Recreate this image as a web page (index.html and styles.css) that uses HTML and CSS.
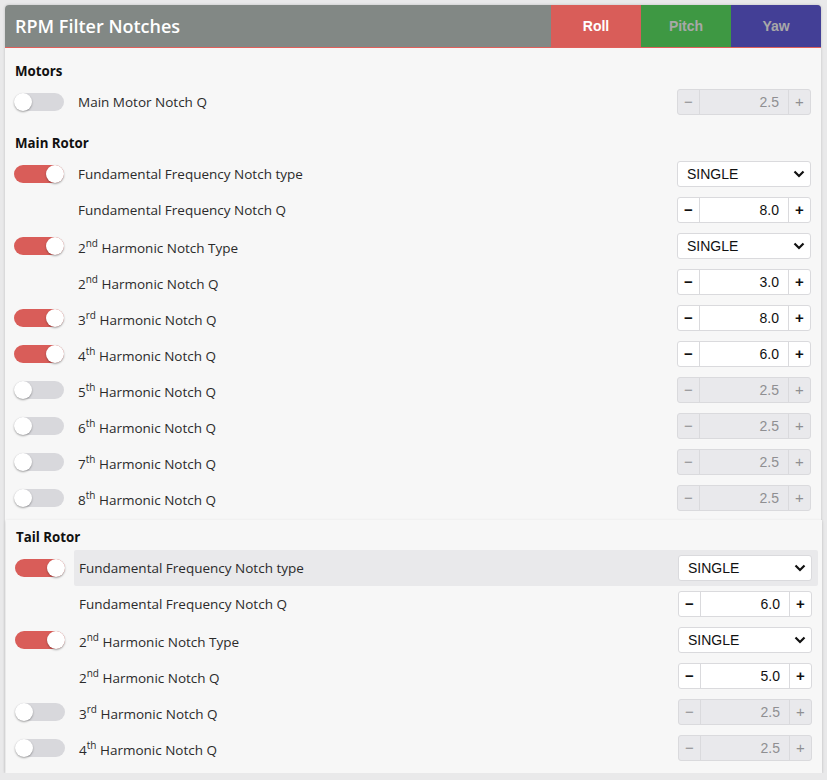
FILE: index.html
```html
<!DOCTYPE html>
<html>
<head>
<meta charset="utf-8">
<link rel="stylesheet" href="styles.css">
</head>
<body>
<div class="panel">
  <div class="head">
    <div class="title">RPM Filter Notches</div>
    <div class="tabs">
      <div class="tab roll">Roll</div>
      <div class="tab pitch">Pitch</div>
      <div class="tab yaw">Yaw</div>
    </div>
  </div>

  <div class="group first">
    <h3>Motors</h3>
    <div class="row"><span class="switch"></span><div class="cell"><span class="label">Main Motor Notch Q</span><div class="num disabled"><span class="btn">−</span><span class="val">2.5</span><span class="btn">+</span></div></div></div>
  </div>

  <div class="group">
    <h3>Main Rotor</h3>
    <div class="row"><span class="switch on"></span><div class="cell"><span class="label">Fundamental Frequency Notch type</span><div class="select"><span>SINGLE</span><svg width="12" height="8" viewBox="0 0 12 8"><path d="M1.5 1.5 L6 6 L10.5 1.5" fill="none" stroke="#111" stroke-width="2.2"/></svg></div></div></div>
    <div class="row"><span class="switch none"></span><div class="cell"><span class="label">Fundamental Frequency Notch Q</span><div class="num"><span class="btn">−</span><span class="val">8.0</span><span class="btn">+</span></div></div></div>
    <div class="row"><span class="switch on"></span><div class="cell"><span class="label">2<sup>nd</sup> Harmonic Notch Type</span><div class="select"><span>SINGLE</span><svg width="12" height="8" viewBox="0 0 12 8"><path d="M1.5 1.5 L6 6 L10.5 1.5" fill="none" stroke="#111" stroke-width="2.2"/></svg></div></div></div>
    <div class="row"><span class="switch none"></span><div class="cell"><span class="label">2<sup>nd</sup> Harmonic Notch Q</span><div class="num"><span class="btn">−</span><span class="val">3.0</span><span class="btn">+</span></div></div></div>
    <div class="row"><span class="switch on"></span><div class="cell"><span class="label">3<sup>rd</sup> Harmonic Notch Q</span><div class="num"><span class="btn">−</span><span class="val">8.0</span><span class="btn">+</span></div></div></div>
    <div class="row"><span class="switch on"></span><div class="cell"><span class="label">4<sup>th</sup> Harmonic Notch Q</span><div class="num"><span class="btn">−</span><span class="val">6.0</span><span class="btn">+</span></div></div></div>
    <div class="row"><span class="switch"></span><div class="cell"><span class="label">5<sup>th</sup> Harmonic Notch Q</span><div class="num disabled"><span class="btn">−</span><span class="val">2.5</span><span class="btn">+</span></div></div></div>
    <div class="row"><span class="switch"></span><div class="cell"><span class="label">6<sup>th</sup> Harmonic Notch Q</span><div class="num disabled"><span class="btn">−</span><span class="val">2.5</span><span class="btn">+</span></div></div></div>
    <div class="row"><span class="switch"></span><div class="cell"><span class="label">7<sup>th</sup> Harmonic Notch Q</span><div class="num disabled"><span class="btn">−</span><span class="val">2.5</span><span class="btn">+</span></div></div></div>
    <div class="row"><span class="switch"></span><div class="cell"><span class="label">8<sup>th</sup> Harmonic Notch Q</span><div class="num disabled"><span class="btn">−</span><span class="val">2.5</span><span class="btn">+</span></div></div></div>
  </div>

  <div class="group tail">
    <h3>Tail Rotor</h3>
    <div class="row"><span class="switch on"></span><div class="cell hover"><span class="label">Fundamental Frequency Notch type</span><div class="select"><span>SINGLE</span><svg width="12" height="8" viewBox="0 0 12 8"><path d="M1.5 1.5 L6 6 L10.5 1.5" fill="none" stroke="#111" stroke-width="2.2"/></svg></div></div></div>
    <div class="row"><span class="switch none"></span><div class="cell"><span class="label">Fundamental Frequency Notch Q</span><div class="num"><span class="btn">−</span><span class="val">6.0</span><span class="btn">+</span></div></div></div>
    <div class="row"><span class="switch on"></span><div class="cell"><span class="label">2<sup>nd</sup> Harmonic Notch Type</span><div class="select"><span>SINGLE</span><svg width="12" height="8" viewBox="0 0 12 8"><path d="M1.5 1.5 L6 6 L10.5 1.5" fill="none" stroke="#111" stroke-width="2.2"/></svg></div></div></div>
    <div class="row"><span class="switch none"></span><div class="cell"><span class="label">2<sup>nd</sup> Harmonic Notch Q</span><div class="num"><span class="btn">−</span><span class="val">5.0</span><span class="btn">+</span></div></div></div>
    <div class="row"><span class="switch"></span><div class="cell"><span class="label">3<sup>rd</sup> Harmonic Notch Q</span><div class="num disabled"><span class="btn">−</span><span class="val">2.5</span><span class="btn">+</span></div></div></div>
    <div class="row"><span class="switch"></span><div class="cell"><span class="label">4<sup>th</sup> Harmonic Notch Q</span><div class="num disabled"><span class="btn">−</span><span class="val">2.5</span><span class="btn">+</span></div></div></div>
  </div>
</div>
</body>
</html>
```

FILE: styles.css
```css
html, body {
  margin: 0;
  padding: 0;
  background: #e9e9ea;
}
body {
  padding: 5px 6px 0 5px;
  font-family: "Open Sans", "Liberation Sans", sans-serif;
  color: #2b2b2b;
}
.panel {
  width: 816px;
  background: #f7f7f7;
  border-radius: 4px 4px 0 0;
  box-shadow: 0 0 3px rgba(0,0,0,0.18);
}
.head {
  display: flex;
  height: 42px;
  background: #828885;
  border-bottom: 1px solid #e0605b;
  border-radius: 4px 4px 0 0;
  overflow: hidden;
}
.title {
  flex: 1;
  padding-left: 10px;
  line-height: 42px;
  font-size: 18px;
  font-weight: 600;
  color: #fff;
}
.tabs {
  display: flex;
}
.tab {
  width: 90px;
  line-height: 42px;
  text-align: center;
  font-family: "Liberation Sans", Arial, sans-serif;
  font-weight: bold;
  font-size: 14px;
  color: #a8a8a8;
}
.tab.roll { background: #d95d59; color: #fff; }
.tab.pitch { background: #3e9843; }
.tab.yaw { background: #433f96; }

.group {
  padding: 0 4px 0 9px;
}
.group.first { padding-top: 13px; }
.group h3 {
  margin: 13px 0 3px 1px;
  font-size: 13.3px;
  line-height: 20px;
  font-weight: 700;
  color: #111;
}
.group.first h3 { margin-top: 0; }
.group.tail {
  margin: 4px -1px 0 1px;
  padding-top: 7px;
  padding-bottom: 7px;
  background: #f7f7f7;
  box-shadow: 0 1px 3px rgba(0,0,0,0.15);
}
.group.tail h3 { margin-top: 0; }

.row {
  display: flex;
  align-items: center;
  height: 36px;
}
.switch {
  position: relative;
  flex: none;
  width: 50px;
  height: 18px;
  border-radius: 9px;
  background: #d8d8dc;
  margin-right: 9px;
}
.switch::after {
  content: "";
  position: absolute;
  top: 0;
  left: 0;
  width: 18px;
  height: 18px;
  border-radius: 50%;
  background: #fff;
  box-shadow: 0 1px 2px rgba(0,0,0,0.35);
  box-sizing: border-box;
}
.switch.on { background: #d95d59; }
.switch.on::after { left: 32px; }
.switch.none { background: transparent; }
.switch.none::after { display: none; }

.cell {
  flex: 1;
  height: 36px;
  display: flex;
  align-items: center;
  justify-content: space-between;
  padding: 0 6px 0 5px;
  border-radius: 2px;
}
.cell.hover { background: #e9e9eb; }
.label {
  font-size: 13.5px;
  color: #2b2b2b;
}
.label sup {
  font-size: 10px;
}

.num {
  display: flex;
  width: 134px;
  height: 26px;
  box-sizing: border-box;
  border: 1px solid #dadadd;
  border-radius: 3px;
  background: #fff;
  font-family: "Liberation Sans", Arial, sans-serif;
  font-size: 14px;
  color: #111;
}
.num .btn {
  width: 21px;
  text-align: center;
  line-height: 24px;
  font-size: 15px;
  font-weight: bold;
}
.num .btn:first-child { border-right: 1px solid #dadadd; }
.num .btn:last-child { border-left: 1px solid #dadadd; }
.num .val {
  flex: 1;
  text-align: right;
  padding-right: 9px;
  line-height: 24px;
}
.num.disabled {
  background: #e9e9ec;
  color: #8f8f92;
}
.num.disabled .btn { font-weight: normal; }

.select {
  display: flex;
  align-items: center;
  justify-content: space-between;
  width: 134px;
  height: 26px;
  box-sizing: border-box;
  border: 1px solid #dadadd;
  border-radius: 3px;
  background: #fff;
  padding: 0 5px 0 9px;
  font-family: "Liberation Sans", Arial, sans-serif;
  font-size: 14px;
  color: #111;
}
```
